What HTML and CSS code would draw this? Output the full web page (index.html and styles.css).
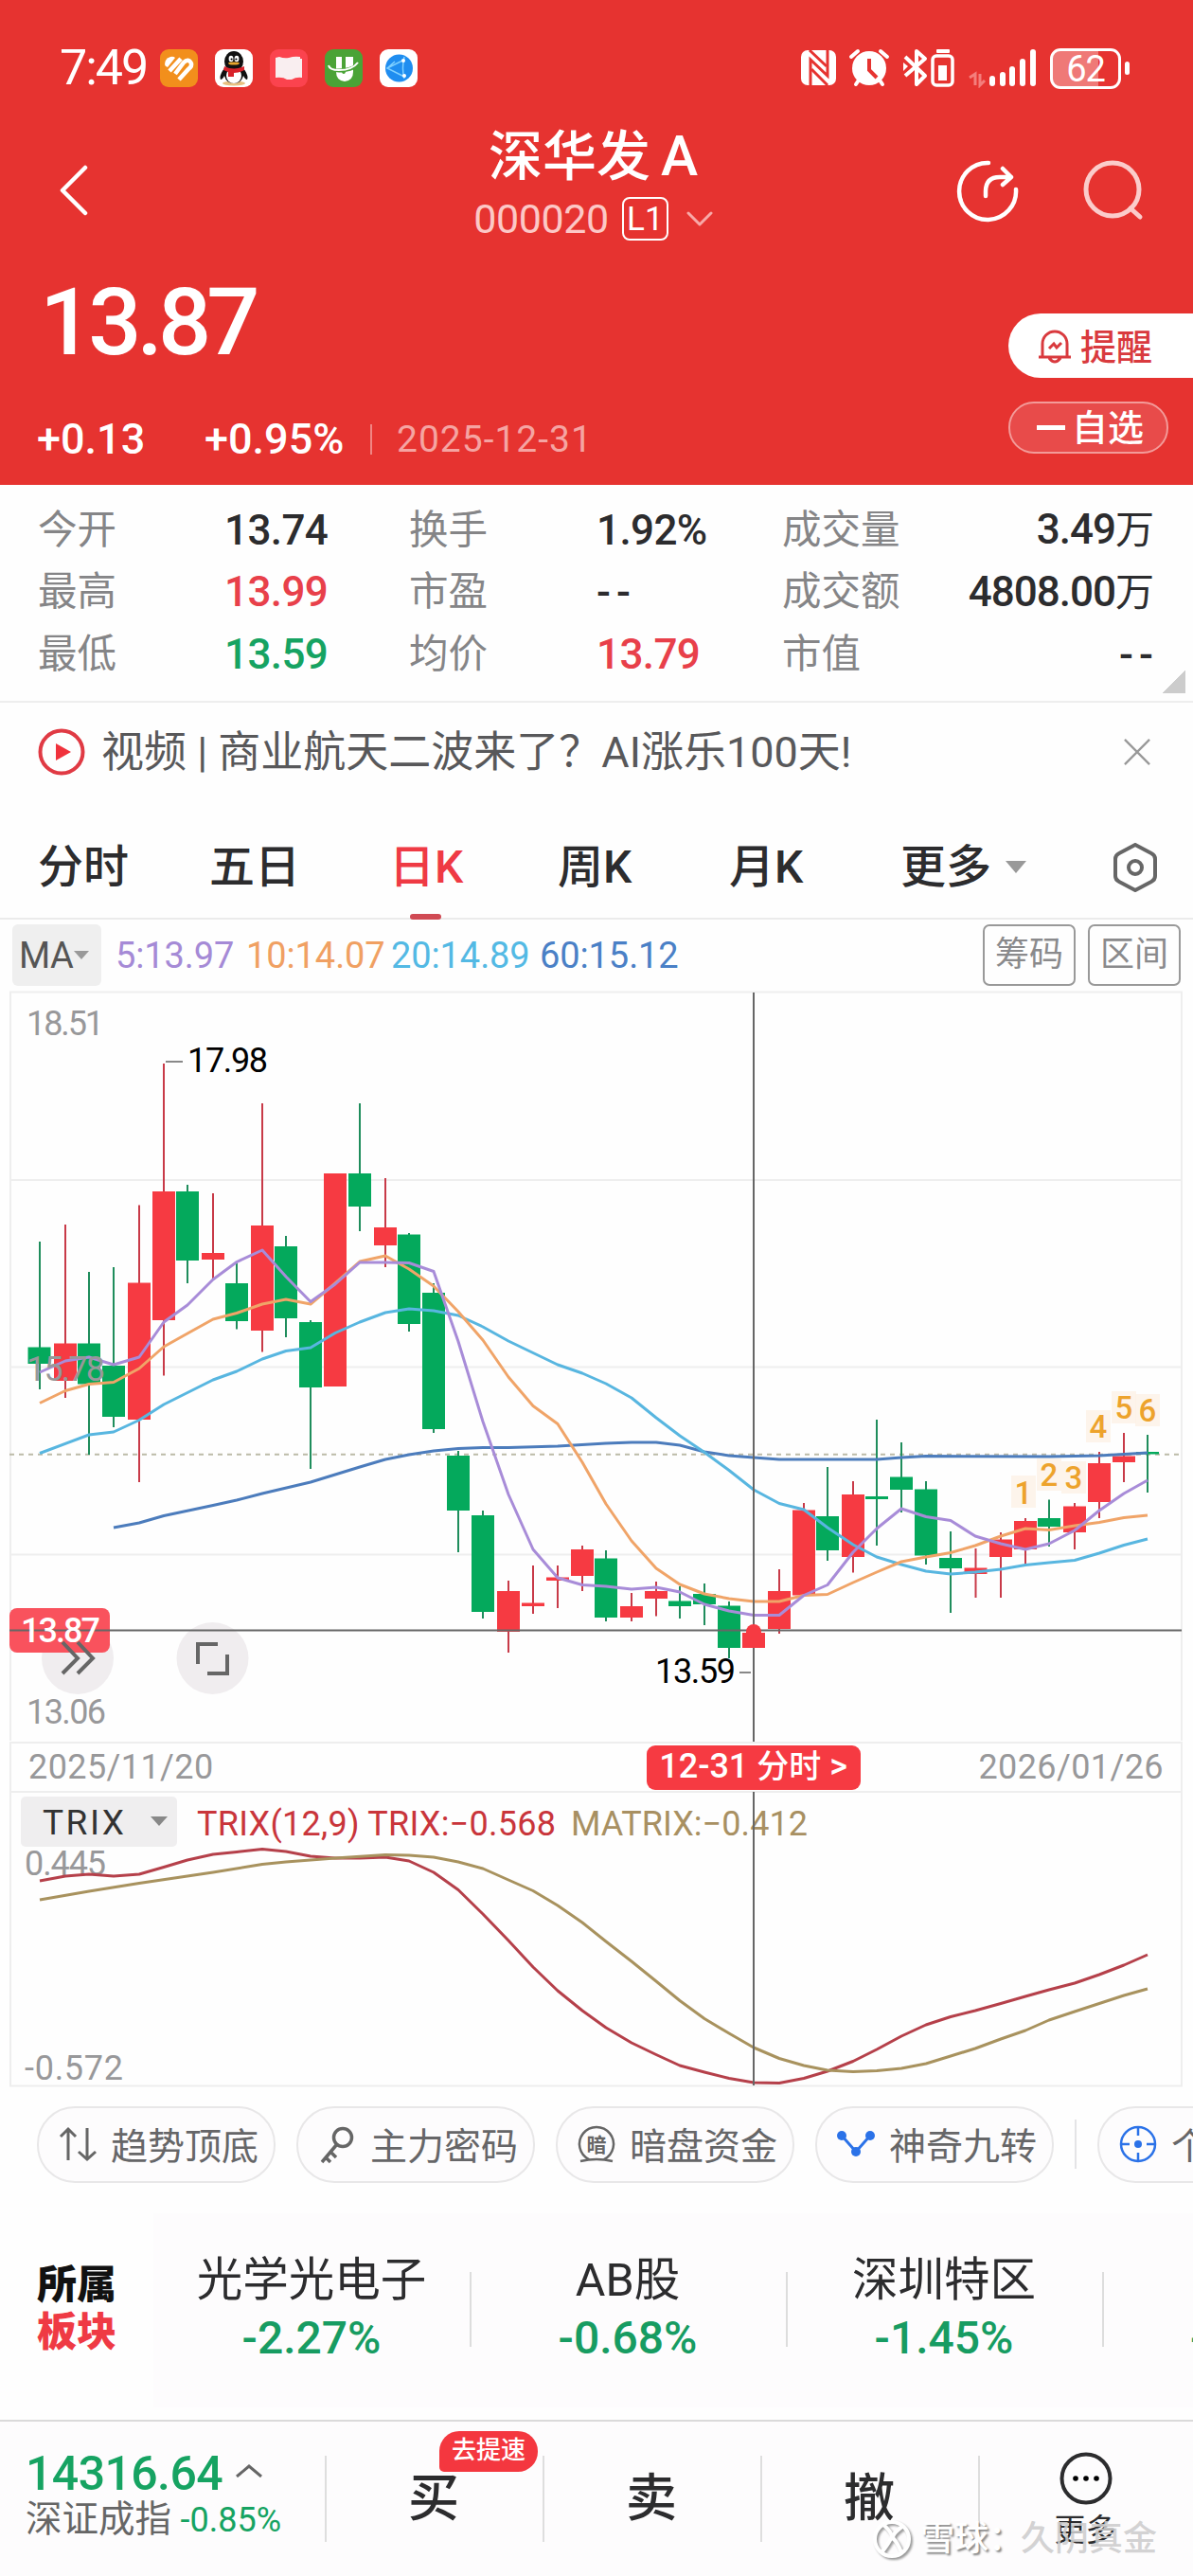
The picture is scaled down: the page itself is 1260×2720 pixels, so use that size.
FILE: index.html
```html
<!DOCTYPE html>
<html lang="zh-CN">
<head>
    <meta charset="UTF-8">
    <meta name="viewport" content="width=device-width, initial-scale=1.0">
    <title>深华发A 000020</title>
    <link rel="stylesheet" href="styles.css">
</head>
<body>

    <header class="header">
        <div class="status-bar">
            <span class="clock">7:49</span>
            <div class="apps">
                <svg class="app" viewBox="0 0 40 40"><rect width="40" height="40" rx="9" fill="#f28f1c"/><path d="M5 16q0-6 6-8q3-1 5 1L8 19q-3-1-3-3z" fill="#fff"/><path d="M10 23L22 10M16 26L25 14q5-5 8 1q1 3-3 6L20 32" fill="none" stroke="#fff" stroke-width="4.500"/></svg>
                <svg class="app" viewBox="0 0 40 40"><rect width="40" height="40" rx="9" fill="#fff"/><ellipse cx="20" cy="36" rx="12" ry="2.5" fill="#e8c080"/><path d="M10 20q-6 8-4 12q2 0 4-4q2 8 10 8t10-8q2 4 4 4q2-4-4-12z" fill="#111"/><ellipse cx="20" cy="28" rx="8" ry="8" fill="#fff"/><ellipse cx="20" cy="13" rx="10" ry="11" fill="#111"/><ellipse cx="17" cy="10" rx="2.4" ry="3.2" fill="#fff"/><ellipse cx="23" cy="10" rx="2.4" ry="3.2" fill="#fff"/><circle cx="17.6" cy="10.5" r="1.1"/><circle cx="22.4" cy="10.5" r="1.1"/><ellipse cx="20" cy="15" rx="6" ry="1.6" fill="#e6a52c"/><path d="M10 18q10 5 21 0v4q-5 3-11 3v4h-6v-5l-5-2z" fill="#d8222a"/></svg>
                <svg class="app" viewBox="0 0 40 40"><rect width="40" height="40" rx="9" fill="#fb434e"/><path d="M6 9l4-1q5 2 10 1q6-2 12-1v2h2v20q-6-1-11 2h-5q-4-3-12-2z" fill="#f9eef0"/></svg>
                <svg class="app" viewBox="0 0 40 40"><rect width="40" height="40" rx="9" fill="#4aa336"/><path d="M12 8h6v15q0 3 2 3t2-3V8h8v16q0 9-9 10q-9-1-9-10z" fill="#fff"/><path d="M4 18q4 6 17 4q12-2 13-7" fill="none" stroke="#4aa336" stroke-width="4"/><path d="M4 17q1 5 11 5q14 0 20-8" fill="none" stroke="#fff" stroke-width="2"/></svg>
                <svg class="app" viewBox="0 0 40 40"><rect width="40" height="40" rx="9" fill="#fff"/><circle cx="20.500" cy="20" r="14.500" fill="#1f8df0"/><path d="M26 11L8 20l18 9M26 8q-3 12 0 23M8 20l8-7" fill="none" stroke="#7fd0ff" stroke-width="1.500"/><circle cx="25" cy="12" r="2" fill="#fff"/><circle cx="26" cy="28" r="2" fill="#fff"/></svg>
            </div>
            <div class="system">
                <svg class="sys-icons" viewBox="0 0 260 42" fill="#fff">
                    <rect x="3" y="2" width="37" height="37" rx="7"/>
                    <path d="M13 40V12l18 17V1" fill="none" stroke="#e63330" stroke-width="3"/><path d="M12 2l18 17M14 22l17 17" stroke="#e63330" stroke-width="3"/>
                    <circle cx="75" cy="21" r="18"/><path d="M56 9l7-6M87 3l7 6M61 38l4-6M89 38l-4-6" stroke="#fff" stroke-width="4" stroke-linecap="round"/><path d="M75 11v12l8 8" fill="none" stroke="#e63330" stroke-width="4"/>
                    <path d="M113 9l21 20l-9 9V3l9 8l-21 18" fill="none" stroke="#fff" stroke-width="4" stroke-linejoin="round"/><path d="M111 15v9l5-5z"/>
                    <rect x="146" y="1" width="14" height="4" rx="1"/><rect x="142" y="8" width="21" height="31" rx="4" fill="none" stroke="#fff" stroke-width="3.500"/><rect x="148" y="18" width="9" height="16"/>
                    <path d="M181 31l6-4v12M192 27v12l5-5" fill="none" stroke="#f47e7c" stroke-width="3"/>
                    <rect x="202" y="29" width="6" height="11" rx="3"/><rect x="213" y="25" width="6" height="15" rx="3"/><rect x="223" y="19" width="6" height="21" rx="3"/><rect x="234" y="11" width="6" height="29" rx="3"/><rect x="245" y="1" width="6" height="39" rx="3"/>
                </svg>
                <span class="battery">62</span><i class="battery-tip"></i>
            </div>
        </div>

        <div class="nav">
            <svg class="back" viewBox="0 0 32 54"><path d="M28 3L4 27l24 24"/></svg>
            <div class="stock">
                <h1>深华发<span>A</span></h1>
                <div class="code-row">
                    <span class="code">000020</span><span class="level">L1</span>
                    <svg class="code-caret" viewBox="0 0 28 16"><path d="M2 2l12 12L26 2"/></svg>
                </div>
            </div>
            <div class="nav-icons">
                <svg class="share" viewBox="0 0 66 66"><path d="M34 3A30 30 0 1 0 63 31M31 38V33q0-15 15-15h12M49 9l9 9l-9 8"/></svg>
                <svg class="search" viewBox="0 0 64 64"><circle cx="31" cy="31" r="28"/><path d="M50 51l10 9"/></svg>
            </div>
        </div>

        <div class="quote">
            <div>
                <div class="price">13.87</div>
                <div class="change">
                    <span class="diff">+0.13</span>
                    <span class="pct">+0.95%</span>
                    <span class="date">2025-12-31</span>
                </div>
            </div>
            <div class="actions">
                <div class="remind">
                    <svg viewBox="0 0 36 38"><path d="M5 31V17a13 13 0 0 1 26 0v14M1 31h34M12 32q6 8 12 0M12 22l5-5l3 4l5-5"/></svg>提醒
                </div>
                <div class="favorite"><i></i>自选</div>
            </div>
        </div>
    </header>

    <section class="stats">
        <span class="label">今开</span><span class="num">13.74</span>
        <span class="label">换手</span><span class="num">1.92%</span>
        <span class="label">成交量</span><span class="num end">3.49<b>万</b></span>
        <span class="label">最高</span><span class="num up">13.99</span>
        <span class="label">市盈</span><span class="num dash">--</span>
        <span class="label">成交额</span><span class="num end">4808.00<b>万</b></span>
        <span class="label">最低</span><span class="num down">13.59</span>
        <span class="label">均价</span><span class="num up">13.79</span>
        <span class="label">市值</span><span class="num end dash">--</span>
    </section>

    <section class="notice">
        <svg class="play" viewBox="0 0 50 50"><circle cx="25" cy="25" r="22.500"/><path d="M19 16l16 9l-16 9z"/></svg>
        <p>视频 | 商业航天二波来了？<span>AI</span>涨乐<span>100</span>天!</p>
        <svg class="close" viewBox="0 0 30 30"><path d="M1 1l28 28M29 1L1 29"/></svg>
    </section>

    <nav class="tabs">
        <span>分时</span>
        <span>五日</span>
        <span class="active">日K</span>
        <span>周K</span>
        <span>月K</span>
        <span class="more">更多<i class="tri"></i></span>
        <svg class="setting" viewBox="0 0 48 52"><path d="M24 2l17 9q4 2 4 6v18q0 4-4 6l-17 9l-17-9q-4-2-4-6V17q0-4 4-6z"/><circle cx="24" cy="26" r="7"/></svg>
    </nav>

    <section class="ma-bar">
        <span class="ma-select">MA<i class="tri"></i></span>
        <span class="ma ma5">5:13.97</span>
        <span class="ma ma10">10:14.07</span>
        <span class="ma ma20">20:14.89</span>
        <span class="ma ma60">60:15.12</span>
        <span class="tool">筹码</span>
        <span class="tool">区间</span>
    </section>

    <!-- K line -->
    <svg class="kline" viewBox="0 1046 1260 793">
        <path class="grid" d="M10 1246H1248M10 1443.500H1248M10 1641.500H1248M11 1838V1047.500H1248V1838"/>
        <path class="limit" d="M10 1535.700H1248"/>
        <g class="red">
            <path class="wick" d="M69 1293V1476M147 1272.500V1565M173 1123V1452.500M225 1260V1351M277 1165V1427.500M407 1244V1338M537 1669V1745M563 1653V1704M589 1653V1698M615 1632V1680M667 1682V1712M693 1670V1706.500M796 1705V1764M823 1657V1725M849 1587V1686M901 1564V1660.500M1030.500 1635V1687M1057 1618V1687M1083 1603V1652M1135 1587V1636M1161 1533V1603M1187 1513V1565"/>
            <path class="body" d="M69 1418.500V1458M147 1354.500V1499M173 1258V1394M225 1323V1330M277 1294V1405M354 1239V1464M407 1296V1315M537 1680V1723M563 1692.500V1696M589 1665.500V1669M615 1636V1664M667 1696V1708M693 1680V1688M796 1724V1740M823 1680V1720M849 1594.500V1684.500M901 1578V1644M1030.500 1655.500V1662M1057 1625.500V1644M1083 1606V1636M1135 1590.500V1618M1161 1545V1586M1187 1537.500V1544"/>
        </g>
        <g class="green">
            <path class="wick" d="M42 1311V1467M94 1343V1536M120 1338V1507M198 1251V1355M250 1333V1403.500M302 1305V1412M328 1394V1551M380 1165V1300M432 1302V1406M458 1355V1513M484 1532V1639M510 1595V1709M640 1637V1712M718 1675V1709M744 1672V1716M770 1691V1751M874 1549V1648M926 1499V1632M952 1523V1597M978 1564V1652M1004 1617V1703M1108 1583.500V1633M1212 1515V1576"/>
            <path class="body" d="M41.500 1422.500V1440M94 1418.500V1461.500M120 1442V1496M198 1258V1331M250 1355V1395M302 1316V1392M328 1396V1465M380 1239V1274M432 1303.500V1398M458 1365V1509M484 1537V1595M510 1600V1702M640 1645.500V1708M718 1690.500V1696M744 1683V1694M770 1695.500V1740M874 1601V1637M926 1580V1583M952 1559.500V1573M978 1572.500V1642.500M1004 1645V1656M1108 1603V1612M1212 1533V1535.500"/>
        </g>
        <polyline class="line60" points="120,1613 147,1608 173,1600.500 225,1589.500 250,1584 277,1577 328,1565 380,1549 407,1541 432,1536 458,1532 484,1529.500 510,1528.500 537,1528.500 589,1527 640,1524 667,1523 693,1523 718,1526 744,1533 770,1537 796,1539 823,1541 926,1541 952,1539 978,1537.500 1108,1538 1161,1537 1187,1535.500 1212,1534"/>
        <polyline class="line20" points="42,1534.500 94,1515 120,1512 147,1499.500 173,1483 225,1457 250,1448 277,1435 302,1426.500 328,1423 354,1407.500 380,1396 407,1386 432,1382 458,1384 484,1389 510,1401 537,1416 589,1441 615,1450 640,1461 667,1476 693,1497 718,1516 744,1533.500 770,1552.500 796,1573 823,1587.500 849,1594 874,1613 901,1631 926,1644 952,1652 978,1659 1004,1662 1030,1660 1057,1657 1083,1652.500 1108,1650 1135,1647.500 1161,1640 1187,1631.500 1212,1625"/>
        <polyline class="line10" points="42,1481.500 69,1468.500 94,1461.500 120,1459.500 147,1445 173,1422 198,1408 225,1393 250,1386.500 277,1377 302,1372 328,1377 354,1355 380,1332 407,1326 432,1340 458,1358 484,1385 510,1415 537,1454 563,1484.500 589,1503.500 615,1544 640,1588 667,1627 693,1656 718,1673 744,1683 770,1688 796,1691 823,1691 849,1684.500 874,1683.500 901,1671 926,1660 952,1649 978,1644 1004,1639.500 1030,1632 1057,1622 1083,1614 1108,1615.500 1135,1611 1161,1607.500 1187,1602.500 1212,1600"/>
        <polyline class="line5" points="42,1449 69,1437 94,1433 120,1441 147,1433 173,1396 198,1378 225,1351 250,1332.500 277,1320 302,1348 328,1374.500 354,1356 380,1333 407,1333 432,1333.500 458,1342.500 484,1416.500 510,1501 537,1578 563,1636 589,1666 615,1673.500 640,1675 667,1678 693,1676 718,1681 744,1694 770,1701 796,1705.500 823,1705.500 849,1684.500 874,1673.500 901,1639 926,1614 952,1593 978,1601.500 1004,1605.500 1030,1622 1057,1630 1083,1636 1108,1630 1135,1616 1161,1595 1187,1577 1212,1563"/>
        <circle cx="82" cy="1751" r="38" fill="#f0edef"/>
        <circle cx="224.500" cy="1751" r="38" fill="#f0edef"/>
        <rect x="10" y="1698" width="106" height="47" rx="8" fill="#f9525d"/>
        <path class="tool-icon" d="M66 1734l16 17l-16 16M82 1734l16 17l-16 16M230 1736h-21v21M240 1747v20h-21"/>
        <path class="cross" d="M10 1721.500H1248M796 1048V1839"/>
        <path d="M788 1740v-17a8 8 0 0 1 16 0v17z" fill="#f63a42"/>
        <path class="mark" d="M175 1121H193M781 1766H793"/>
        <text class="axis" x="28" y="1093" textLength="82">18.51</text>
        <text class="axis" x="28" y="1458" textLength="83">15.78</text>
        <text class="axis" x="28" y="1820" textLength="84">13.06</text>
        <text class="axis white" x="22" y="1734" textLength="84">13.87</text>
        <text class="axis black" x="198" y="1132" textLength="85">17.98</text>
        <text class="axis black" x="692" y="1777" textLength="85">13.59</text>
        <g class="turn-bg">
            <rect x="1068" y="1558" width="26" height="34"/><rect x="1095" y="1540" width="26" height="34"/><rect x="1121" y="1543" width="26" height="34"/><rect x="1147" y="1489" width="26" height="34"/><rect x="1174" y="1469" width="26" height="34"/><rect x="1199" y="1472" width="26" height="34"/>
        </g>
        <g class="turn">
            <text x="1081" y="1588">1</text><text x="1108" y="1569">2</text><text x="1134" y="1572">3</text><text x="1160" y="1518">4</text><text x="1187" y="1498">5</text><text x="1212" y="1501">6</text>
        </g>
    </svg>

    <div class="dates">
        <span>2025/11/20</span>
        <span class="day">12-31 <b>分时</b> &gt;</span>
        <span>2026/01/26</span>
    </div>

    <!-- TRIX -->
    <svg class="trix" viewBox="0 1891 1260 313">
        <path class="grid" d="M11 1891V2202.500H1248V1891M10 1892H1248"/>
        <rect x="22" y="1897" width="165" height="53" rx="5" fill="#efeeef"/>
        <text class="name" x="45" y="1937" textLength="86">TRIX</text>
        <path d="M159 1918h18l-9 10z" fill="#888"/>
        <text class="param" x="208" y="1937.500" textLength="379" fill="#c9353b">TRIX(12,9) TRIX:−0.568</text>
        <text class="param" x="603" y="1937.500" textLength="250" fill="#a89062">MATRIX:−0.412</text>
        <text class="axis" x="26" y="1980" textLength="86">0.445</text>
        <text class="axis" x="26" y="2196" textLength="104">-0.572</text>
        <polyline stroke="#b5404a" points="42,1986 69,1981 94,1979 120,1981 147,1979 173,1971.500 198,1964 225,1958 250,1955.500 277,1952.500 302,1955 328,1960 354,1962 380,1962 407,1961 432,1965 458,1977 484,1995.500 510,2021 537,2049 563,2077 589,2102 615,2123 640,2141 667,2157 693,2169.500 718,2181 744,2188 770,2194.500 796,2199 823,2199.500 849,2194.500 874,2187 901,2176.500 926,2164 952,2150 978,2138 1004,2129.500 1030,2123 1057,2115.500 1083,2108 1108,2101 1135,2094 1161,2085 1187,2075 1212,2064"/>
        <polyline stroke="#a8925e" points="42,2006 94,1997 147,1988.500 225,1977 277,1968.500 302,1966 354,1962 407,1958.500 432,1959 458,1961 484,1966 510,1973 537,1985 563,1996.500 589,2012 615,2030 640,2050 667,2071 693,2092 718,2112.500 744,2131.500 770,2147 796,2162 823,2173.500 849,2181 874,2186 901,2187.500 926,2186.500 952,2184 978,2179 1004,2171 1030,2163 1057,2153 1083,2144 1108,2133 1135,2124 1161,2115.500 1187,2107 1212,2100"/>
        <path class="cross" d="M796 1892V2202"/>
    </svg>

    <section class="chips">
        <span class="chip"><svg viewBox="0 0 40 40"><path d="M10 37V4M2 12l8-8l8 8M30 3v33M21 28l9 8l9-8" stroke-width="3"/></svg>趋势顶底</span>
        <span class="chip"><svg viewBox="0 0 40 40"><circle cx="26" cy="13" r="9.500" stroke-width="3.500"/><path d="M20 20L4 39M13 28l6 6M7 33l6 6" stroke-width="3.500"/></svg>主力密码</span>
        <span class="chip"><svg viewBox="0 0 40 40"><path d="M12 36a18 18 0 1 1 16 0M3 38q17-4 34 0" stroke-width="2.500"/><text x="20" y="28">暗</text></svg>暗盘资金</span>
        <span class="chip"><svg class="blue" viewBox="0 0 40 40"><path d="M5 11l15 17l15-17" stroke-width="3"/><circle class="dot" cx="5" cy="11" r="5"/><circle class="dot" cx="35" cy="11" r="5"/><circle class="dot" cx="20" cy="28" r="5"/></svg>神奇九转</span>
        <i class="chip-sep"></i>
        <span class="chip"><svg class="blue" viewBox="0 0 40 40"><circle cx="20" cy="20" r="18" stroke-width="2.500"/><path d="M20 2v9M20 29v9M2 20h9M29 20h9" stroke-width="2.500"/><circle class="dot" cx="20" cy="20" r="4"/></svg>个</span>
    </section>

    <section class="sectors">
        <h2>所属<span>板块</span></h2>
        <div class="sector-list">
            <div class="sector"><p>光学光电子</p><em>-2.27%</em></div>
            <div class="sector"><p>AB股</p><em>-0.68%</em></div>
            <div class="sector"><p>深圳特区</p><em>-1.45%</em></div>
            <div class="sector next"><p></p><em>-</em></div>
        </div>
    </section>

    <footer class="footer">
        <div class="index">
            <div class="index-value">14316.64<svg viewBox="0 0 28 14"><path d="M1 13L14 2l13 11"/></svg></div>
            <div class="index-name">深证成指 <em>-0.85%</em></div>
        </div>
        <div class="trade">买<span class="badge">去提速</span></div>
        <div class="trade">卖</div>
        <div class="trade">撤</div>
        <div class="trade menu">
            <svg viewBox="0 0 56 56"><circle cx="28" cy="28" r="25.500" fill="none" stroke="#2c2c2e" stroke-width="4"/><circle cx="17" cy="28" r="2.800"/><circle cx="28" cy="28" r="2.800"/><circle cx="39" cy="28" r="2.800"/></svg>
            <span>更多</span>
        </div>
        <div class="watermark">
            <svg viewBox="0 0 44 44"><circle cx="22" cy="22" r="18"/><path d="M12 6q14 12 8 17q-2 4-8 12M34 8q-14 10-10 14q4 4 8 14"/></svg>
            <span>雪球：</span><span class="user">久阴真金</span>
        </div>
    </footer>

</body>
</html>
```
FILE: styles.css
```css
* {
    box-sizing: border-box;
    margin: 0;
    padding: 0;
}

body {
    width: 1260px;
    height: 2720px;
    overflow: hidden;
    background: #fefefe;
    color: #2c2c2e;
    font-family: Roboto, "Noto Sans CJK SC", sans-serif;
}

i, em {
    font-style: normal;
}

svg {
    display: block;
    flex: none;
}

.tri {
    display: inline-block;
    border: 11px solid transparent;
    border-top: 13px solid #999;
    border-bottom: 0;
}

/* Header */
.header {
    height: 512px;
    background: #e63330;
    color: #fff;
}

.status-bar {
    display: flex;
    align-items: center;
    height: 92px;
    padding: 52px 67px 0 63px;
}

.clock {
    width: 106px;
    font-size: 52px;
    line-height: 40px;
    letter-spacing: -2px;
}

.apps {
    display: flex;
    gap: 18px;
}

.app {
    width: 40px;
    height: 40px;
}

.system {
    display: flex;
    align-items: center;
    margin-left: auto;
}

.sys-icons {
    width: 260px;
    height: 42px;
}

.battery {
    width: 75px;
    height: 43px;
    margin-left: 6px;
    border: 3px solid #fff;
    border-radius: 11px;
    background: linear-gradient(90deg, #ef7977 70%, #e63330 70%);
    font-size: 38px;
    line-height: 38px;
    letter-spacing: -1px;
    text-align: center;
}

.battery-tip {
    width: 5px;
    height: 14px;
    margin-left: 4px;
    border-radius: 3px;
    background: #fff;
}

.nav {
    display: flex;
    align-items: flex-start;
    justify-content: space-between;
    height: 188px;
    padding: 36px 52px 0 62px;
}

.nav path, .nav circle {
    fill: none;
    stroke: #fff;
    stroke-width: 4.5;
    stroke-linecap: round;
    stroke-linejoin: round;
}

.back {
    width: 32px;
    height: 54px;
    margin-top: 46px;
}

.stock {
    margin-left: 149px;
    text-align: center;
}

.stock h1 {
    font-size: 57px;
    font-weight: 500;
    line-height: 74px;
}

.stock h1 span {
    margin-left: 11px;
    font-size: 59px;
}

.code-row {
    display: flex;
    align-items: center;
    margin-top: 4px;
}

.code {
    color: #fcc8c6;
    font-size: 43px;
    line-height: 48px;
    letter-spacing: -.4px;
}

.level {
    width: 49px;
    height: 46px;
    margin-left: 14px;
    border: 2px solid #fff;
    border-radius: 8px;
    font-size: 35px;
    line-height: 43px;
    text-align: center;
}

.code-caret {
    width: 28px;
    height: 16px;
    margin-left: 19px;
}

.nav .code-caret path {
    stroke: #f8a9a7;
    stroke-width: 3;
}

.nav-icons {
    display: flex;
    gap: 68px;
    margin-top: 41px;
}

.share {
    width: 66px;
    height: 66px;
}

.search {
    width: 64px;
    height: 64px;
}

.nav .search * {
    stroke: #fbcccb;
    stroke-width: 5;
}

.quote {
    display: flex;
    justify-content: space-between;
    padding-left: 39px;
}

.price {
    margin: 1px 0 0 3px;
    font-size: 99px;
    font-weight: 500;
    line-height: 118px;
    letter-spacing: -5px;
}

.change {
    display: flex;
    align-items: center;
    margin-top: 40px;
    font-size: 45px;
    font-weight: 500;
    line-height: 50px;
}

.diff {
    width: 177px;
}

.pct {
    width: 175px;
}

.date {
    padding-left: 26px;
    border-left: 2px solid #f08583;
    color: #f5a4a2;
    font-size: 39px;
    font-weight: 400;
    line-height: 32px;
    letter-spacing: 1px;
}

.remind {
    display: flex;
    align-items: center;
    width: 195px;
    height: 68px;
    margin-top: 51px;
    padding: 0 0 4px 31px;
    border-radius: 34px 0 0 34px;
    background: #fff;
    color: #d93a3e;
    font-size: 38px;
    font-weight: 500;
}

.remind svg {
    width: 36px;
    height: 38px;
    margin: 3px 9px 0 0;
    fill: none;
    stroke: #d93a3e;
    stroke-width: 3;
}

.favorite {
    display: flex;
    align-items: center;
    width: 169px;
    height: 55px;
    margin-top: 25px;
    padding-left: 28px;
    border: 2px solid #f39b99;
    border-radius: 27px;
    background: #e84b4a;
    font-size: 38px;
    font-weight: 500;
    line-height: 50px;
}

.favorite i {
    width: 30px;
    height: 5px;
    margin-right: 7px;
    background: #fff;
}

/* Stats */
.stats {
    display: grid;
    grid-template-columns: 197px 195px 198px 196px 151px 1fr;
    grid-auto-rows: 65.5px;
    align-items: center;
    height: 230px;
    padding: 15px 42px 0 40px;
    border-bottom: 2px solid #eee;
    background: linear-gradient(135deg, transparent 50%, #ccc 50%) 1228px 196px / 24px 24px no-repeat;
}

.label {
    color: #858587;
    font-size: 41.5px;
    line-height: 60px;
}

.num {
    font-size: 44px;
    font-weight: 500;
    line-height: 60px;
    letter-spacing: -.6px;
    white-space: nowrap;
}

.num b {
    font-size: 41px;
    font-weight: 400;
}

.dash {
    letter-spacing: 6px;
}

.end {
    text-align: right;
    letter-spacing: -1px;
}

.end.dash {
    margin-right: -6px;
    letter-spacing: 6px;
}

.up {
    color: #e8404a;
}

.down {
    color: #16a362;
}

/* Notice */
.notice {
    display: flex;
    align-items: center;
    height: 104px;
    padding: 0 45px 0 40px;
}

.play {
    width: 50px;
    height: 50px;
}

.play circle {
    fill: none;
    stroke: #e03a44;
    stroke-width: 4;
}

.play path {
    fill: #f0323c;
}

.notice p {
    flex: 1;
    margin: 2px 0 0 17px;
    color: #58585a;
    font-size: 45px;
    line-height: 60px;
    white-space: nowrap;
}

.close {
    width: 28px;
    height: 28px;
    stroke: #999;
    stroke-width: 2.5;
}

/* Period tabs */
.tabs {
    display: flex;
    align-items: center;
    height: 125px;
    padding: 16px 37px 0 40px;
    border-bottom: 2px solid #ebebeb;
    font-size: 48px;
    font-weight: 500;
    line-height: 60px;
}

.tabs span {
    position: relative;
    width: 181px;
}

.tabs span:nth-child(2) { width: 190px; }
.tabs span:nth-child(3) { width: 178px; }
.tabs span:nth-child(5) { width: 181px; }

.tabs .more {
    display: flex;
    align-items: center;
    gap: 15px;
    width: 206px;
}

.tabs .active {
    color: #ef3a44;
}

.active::after {
    content: "";
    position: absolute;
    left: 22px;
    bottom: -25px;
    width: 33px;
    height: 6px;
    border-radius: 3px;
    background: #d04a54;
}

.setting {
    width: 48px;
    height: 52px;
    margin-left: auto;
    fill: none;
    stroke: #666;
    stroke-width: 4;
}

/* MA legend */
.ma-bar {
    display: flex;
    align-items: center;
    height: 75px;
    padding: 0 13px;
    font-size: 38px;
    letter-spacing: -.1px;
}

.ma-select {
    display: flex;
    align-items: center;
    gap: 1px;
    width: 94px;
    height: 65px;
    margin-right: 15px;
    padding-left: 7px;
    border-radius: 6px;
    background: #efefef;
    color: #555;
    letter-spacing: -.5px;
}

.ma-select .tri {
    border-width: 9px 8px 0;
}

.ma5 { width: 138px; color: #a58ad6; }
.ma10 { width: 153px; color: #f0a062; }
.ma20 { width: 157px; color: #53b9e4; }
.ma60 { color: #4a80c6; }

.tool {
    width: 98px;
    height: 65px;
    margin-left: 13px;
    border: 2px solid #999;
    border-radius: 7px;
    color: #8a8a8c;
    font-size: 36px;
    line-height: 61px;
    letter-spacing: 0;
    text-align: center;
}

.ma60 + .tool {
    margin-left: auto;
}

/* Charts */
.kline, .trix {
    width: 1260px;
    fill: none;
}

.kline {
    height: 793px;
}

.trix {
    height: 313px;
}

.grid {
    stroke: #eee;
    stroke-width: 2;
}

.limit {
    stroke: #bcbba8;
    stroke-width: 2;
    stroke-dasharray: 5 5;
}

.wick { stroke-width: 2; }
.body { stroke-width: 24; }
.red .wick { stroke: #c83a48; }
.red .body { stroke: #f63a42; }
.green .wick { stroke: #1f8d5c; }
.green .body { stroke: #04a95c; }

polyline {
    stroke-width: 3;
    stroke-linejoin: round;
}

.line5 { stroke: #a88cd8; }
.line10 { stroke: #f0a468; }
.line20 { stroke: #58b6e0; }
.line60 { stroke: #4c7cbc; }

.cross {
    stroke: #666;
    stroke-width: 2;
}

.mark {
    stroke: #888;
    stroke-width: 2;
}

.tool-icon {
    stroke: #666;
    stroke-width: 4;
}

.axis {
    fill: #98989a;
    font-size: 36px;
}

.axis.white { fill: #fff; font-weight: 500; }
.axis.black { fill: #000; }

.turn-bg {
    fill: #fdf1e6;
    fill-opacity: .8;
}

.turn {
    fill: #eda32c;
    font-size: 33px;
    font-weight: 500;
    text-anchor: middle;
}

.name {
    fill: #333;
    font-size: 37px;
}

.param {
    font-size: 36px;
}

.dates {
    display: flex;
    align-items: center;
    height: 52px;
    margin: 0 11px 0 10px;
    padding: 0 18px 0 18px;
    border: solid #eee;
    border-width: 2px 2px 0;
    color: #98989a;
    font-size: 36px;
    letter-spacing: .4px;
}

.day {
    width: 226px;
    height: 47px;
    margin: 0 auto 0 457px;
    border-radius: 9px;
    background: #f63a42;
    color: #fff;
    font-weight: 500;
    line-height: 45px;
    letter-spacing: 0;
    text-align: center;
}

.day b {
    font-size: 34px;
    font-weight: 500;
}

/* Chips */
.chips {
    display: flex;
    align-items: center;
    gap: 22px;
    height: 120px;
    padding-left: 39px;
    overflow: hidden;
}

.chip {
    display: flex;
    flex: none;
    align-items: center;
    width: 252px;
    height: 81px;
    padding: 0 0 2px 21px;
    border: 2px solid #e8e7e8;
    border-radius: 40px;
    background: #fdfcfd;
    color: #666668;
    font-size: 39px;
    white-space: nowrap;
}

.chip svg {
    width: 40px;
    height: 40px;
    margin: 2px 15px 0 0;
    fill: none;
    stroke: #666;
    overflow: visible;
}

.chip text {
    fill: #666;
    stroke: none;
    font-size: 21px;
    font-weight: 700;
    text-anchor: middle;
}

.chip .blue {
    stroke: #2b72e8;
}

.chip .dot {
    fill: #2b72e8;
    stroke: none;
}

.chip-sep {
    flex: none;
    width: 2px;
    height: 52px;
    background: #e4e4e6;
}

/* Sectors */
.sectors {
    display: flex;
    align-items: center;
    height: 231px;
    padding-left: 39px;
}

.sectors h2 {
    width: 123px;
    margin-top: -4px;
    color: #111;
    font-size: 42px;
    font-weight: 900;
    line-height: 50px;
}

.sectors h2 span {
    display: block;
    color: #ef3a44;
}

.sector-list {
    display: flex;
    width: 1098px;
    height: 205px;
    overflow: hidden;
    background: #fdfcfd;
}

.sector {
    position: relative;
    flex: none;
    width: 334px;
    padding-top: 38px;
    text-align: center;
}

.sector + .sector::before {
    content: "";
    position: absolute;
    left: 0;
    top: 62px;
    width: 2px;
    height: 79px;
    background: #ddd;
}

.sector p {
    height: 64px;
    font-size: 48.5px;
    line-height: 66px;
}

.sector em {
    display: block;
    color: #179c62;
    font-size: 48px;
    font-weight: 500;
    line-height: 60px;
}

.next em {
    padding-left: 93px;
    text-align: left;
}

/* Footer */
.footer {
    position: relative;
    display: flex;
    height: 167px;
    border-top: 2px solid #dadada;
    background: #fdfcfd;
}

.index {
    width: 343px;
    padding: 26px 0 0 27px;
    white-space: nowrap;
}

.index-value {
    display: flex;
    align-items: center;
    color: #16a362;
    font-size: 50px;
    font-weight: 500;
    line-height: 58px;
    letter-spacing: -.6px;
}

.index-value svg {
    width: 28px;
    height: 14px;
    margin: 0 0 6px 14px;
    fill: none;
    stroke: #666;
    stroke-width: 3;
}

.index-name {
    color: #666;
    font-size: 38.5px;
    line-height: 38px;
}

.index-name em {
    color: #16a362;
    font-size: 36px;
}

.trade {
    position: relative;
    width: 230px;
    height: 163px;
    font-size: 54px;
    font-weight: 500;
    line-height: 163px;
    text-align: center;
}

.trade::before {
    content: "";
    position: absolute;
    left: 0;
    top: 36px;
    width: 2px;
    height: 91px;
    background: #dedede;
}

.badge {
    position: absolute;
    left: 121px;
    top: 10px;
    width: 104px;
    height: 43px;
    border-radius: 21px 21px 21px 5px;
    background: #f4373f;
    color: #fff;
    font-size: 26px;
    line-height: 40px;
}

.menu {
    display: flex;
    flex-direction: column;
    align-items: center;
    width: 227px;
    padding-top: 32px;
    font-size: 33px;
    font-weight: 400;
    line-height: 50px;
}

.menu svg {
    width: 56px;
    height: 56px;
    margin-bottom: 2px;
}

.watermark {
    position: absolute;
    left: 920px;
    top: 100px;
    display: flex;
    align-items: center;
    color: #fff;
    font-size: 36px;
    font-weight: 500;
    line-height: 48px;
    text-shadow: 2px 2px 2px #888;
    white-space: nowrap;
}

.watermark svg {
    width: 44px;
    height: 44px;
    margin-right: 8px;
    fill: none;
    stroke: #fff;
    stroke-width: 4;
    filter: drop-shadow(2px 2px 1px #999);
}

.watermark .user {
    margin-left: -2px;
    color: rgba(205, 205, 205, .9);
    text-shadow: none;
}
```
